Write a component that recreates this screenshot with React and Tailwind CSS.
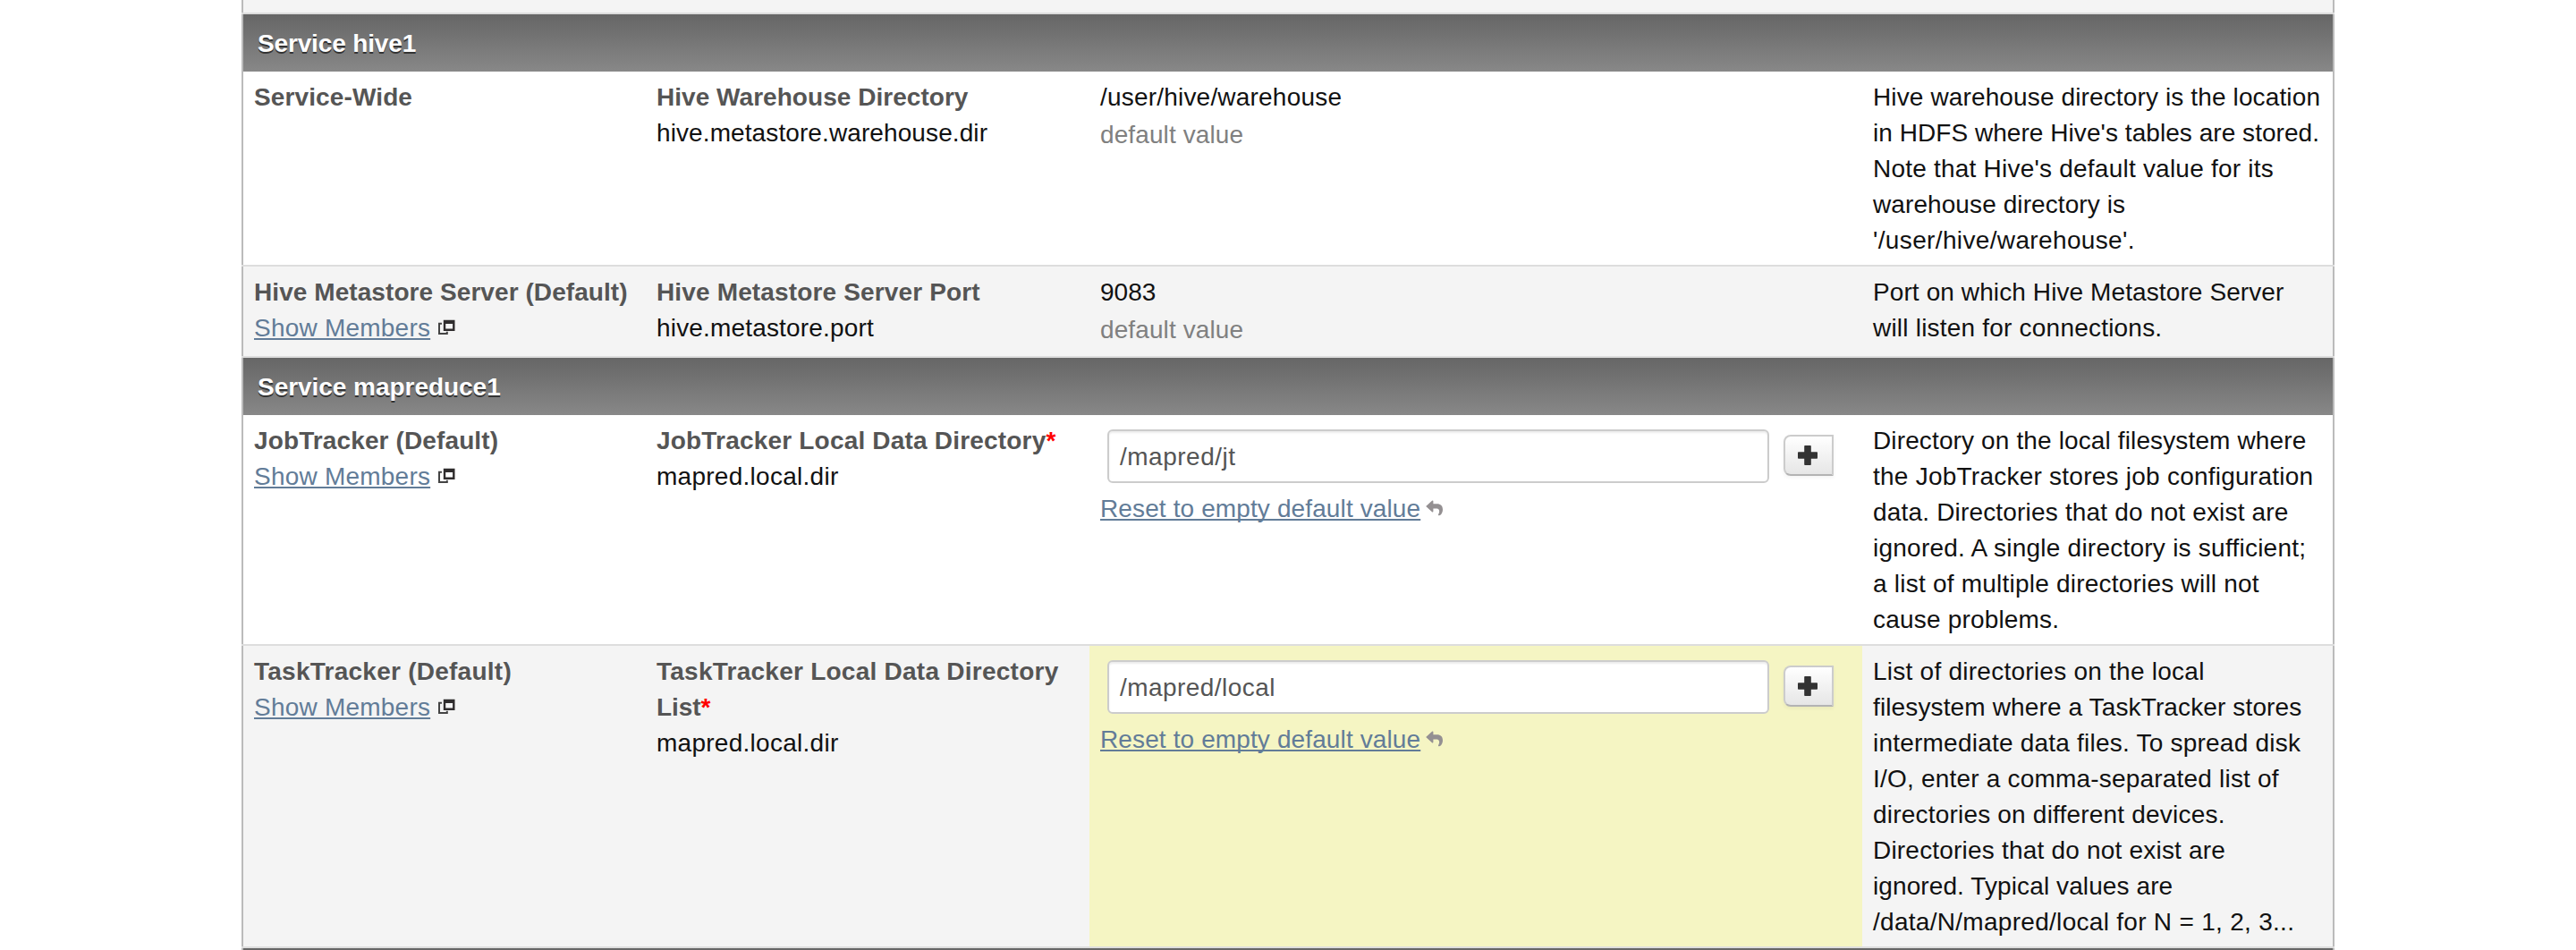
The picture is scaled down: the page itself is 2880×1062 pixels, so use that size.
function Line({ text, track = '', children }) {
  return (
    <div className="h-10 whitespace-nowrap">
      <span className={track}>{text}</span>
      {children}
    </div>
  );
}

function PopupIcon() {
  return (
    <svg className="ml-2 inline-block align-[1px]" width="20" height="18" viewBox="0 0 20 18" fill="none">
      <path d="M5 4.8H2V16H10.8V13.8" stroke="#444" strokeWidth="2" />
      <path fillRule="evenodd" d="M6.8 0.8H19.5V13H6.8ZM9.2 5V10.6H17.1V5Z" fill="#2f2c2d" />
    </svg>
  );
}

function UndoIcon() {
  return (
    <svg className="ml-1.5 inline-block align-baseline" width="20" height="19" viewBox="0 0 20 19">
      <path
        d="M0.2 7L7 0.8Q8.4 0 8.4 1.4V4.2H12.5C16.8 4.2 19 6.6 19 10.6C19 13.6 17.6 17 15 17.2C14 17.2 13.6 16.2 14.4 15.4C15.6 13.6 15.6 9.8 12.5 9.6H8.4V12.6Q8.4 14 7 13.2Z"
        fill="#949092"
      />
    </svg>
  );
}

function Link({ children, className = '' }) {
  return (
    <a
      className={
        'text-[#627c98] underline decoration-2 underline-offset-[2px] [text-decoration-skip-ink:none] ' + className
      }
    >
      {children}
    </a>
  );
}

function Header({ text, track }) {
  return (
    <div className="h-16 border-x-2 border-[#bbb] bg-white">
      <div className="h-16 bg-gradient-to-b from-[#666] to-[#888] px-4 pt-[13px] font-bold whitespace-nowrap text-white [text-shadow:0_2px_0_#333]">
        <span className={track}>{text}</span>
      </div>
    </div>
  );
}

function Rule() {
  return <div className="h-0.5 bg-[#ddd]" />;
}

function ReadOnlyValue({ value, track }) {
  return (
    <>
      <Line text={value} track={track} />
      <div className="pt-0.5 text-[#808080]">
        <Line text="default value" track="tracking-[0.11px]" />
      </div>
    </>
  );
}

function EditableValue({ value, track }) {
  return (
    <>
      <div className="flex pt-[7px] pl-2">
        <div className="h-[60px] w-[740px] rounded-md border-2 border-[#ccc] bg-white px-3 pt-[9px] text-[#555] shadow-[inset_0_2px_2px_rgba(0,0,0,0.075)]">
          <Line text={value} track={track} />
        </div>
        <button className="mt-1.5 ml-4 flex h-[46px] w-14 items-center justify-center rounded-l-lg border-2 border-[#ccc] border-b-[#b3b3b3] bg-gradient-to-b from-white to-[#e6e6e6] shadow-[0_2px_4px_rgba(0,0,0,0.05)]">
          <svg className="mr-0.5" width="24" height="24" viewBox="0 0 24 24">
            <path
              d="M9 1h6a.8.8 0 0 1 .8.8V8.2h6.4a.8.8 0 0 1 .8.8v6a.8.8 0 0 1-.8.8H15.8v6.4a.8.8 0 0 1-.8.8H9a.8.8 0 0 1-.8-.8V15.8H1.8a.8.8 0 0 1-.8-.8V9a.8.8 0 0 1 .8-.8H8.2V1.8A.8.8 0 0 1 9 1Z"
              fill="#333"
            />
          </svg>
        </button>
      </div>
      <div className="pt-[9px] whitespace-nowrap">
        <Link className="tracking-[0.12px]">Reset to empty default value</Link>
        <UndoIcon />
      </div>
    </>
  );
}

function Row({ height, bg = 'bg-white', valueBg = '', group, groupTrack, members, names, prop, propTrack, value, desc }) {
  return (
    <div
      className={
        'grid grid-cols-[450px_496px_864px_526px] overflow-hidden border-x-2 border-[#bbb] ' + bg + ' ' + height
      }
    >
      <div className="px-3 pt-[9px]">
        <div className="font-bold text-[#555]">
          <Line text={group} track={groupTrack} />
        </div>
        {members && (
          <div className="h-10 whitespace-nowrap">
            <Link className="tracking-[0.22px]">Show Members</Link>
            <PopupIcon />
          </div>
        )}
      </div>
      <div className="px-3 pt-[9px]">
        <div className="font-bold text-[#555]">
          {names.map(([text, track, required]) => (
            <Line key={text} text={text} track={track}>
              {required && <span className="text-[#f00]">*</span>}
            </Line>
          ))}
        </div>
        <Line text={prop} track={propTrack} />
      </div>
      <div className={'px-3 pt-[9px] ' + valueBg}>{value}</div>
      <div className="px-3 pt-[9px]">
        {desc.map(([text, track]) => (
          <Line key={text} text={text} track={track} />
        ))}
      </div>
    </div>
  );
}

export default function App() {
  return (
    <div className="h-[1062px] w-[2880px] overflow-hidden bg-white pl-[270px] font-['Liberation_Sans',Arial,sans-serif] text-[28px] leading-10 text-[#111]">
      <div className="w-[2340px]">
        <div className="h-3.5 border-x-2 border-[#bbb] bg-[#f4f4f4]" />
        <Rule />
        <Header text="Service hive1" track="tracking-[-0.15px]" />
        <Row
          height="h-[216px]"
          group="Service-Wide"
          groupTrack="tracking-[0.12px]"
          names={[['Hive Warehouse Directory', 'tracking-[0.04px]']]}
          prop="hive.metastore.warehouse.dir"
          propTrack="tracking-[0.1px]"
          value={<ReadOnlyValue value="/user/hive/warehouse" track="tracking-[0.2px]" />}
          desc={[
            ['Hive warehouse directory is the location', 'tracking-[0.13px]'],
            ["in HDFS where Hive's tables are stored.", 'tracking-[0.05px]'],
            ["Note that Hive's default value for its", 'tracking-[0.22px]'],
            ['warehouse directory is', 'tracking-[0.09px]'],
            ["'/user/hive/warehouse'.", 'tracking-[0.36px]'],
          ]}
        />
        <Rule />
        <Row
          height="h-[100px]"
          bg="bg-[#f4f4f4]"
          group="Hive Metastore Server (Default)"
          groupTrack="tracking-[0.07px]"
          members
          names={[['Hive Metastore Server Port', 'tracking-[0.15px]']]}
          prop="hive.metastore.port"
          propTrack="tracking-[0.17px]"
          value={<ReadOnlyValue value="9083" track="tracking-[0px]" />}
          desc={[
            ['Port on which Hive Metastore Server', 'tracking-[0.1px]'],
            ['will listen for connections.', 'tracking-[0.21px]'],
          ]}
        />
        <Rule />
        <Header text="Service mapreduce1" track="tracking-[-0.04px]" />
        <Row
          height="h-[256px]"
          group="JobTracker (Default)"
          groupTrack="tracking-[0.12px]"
          members
          names={[['JobTracker Local Data Directory', 'tracking-[0.19px]', true]]}
          prop="mapred.local.dir"
          propTrack="tracking-[0.27px]"
          value={<EditableValue value="/mapred/jt" track="tracking-[0.5px]" />}
          desc={[
            ['Directory on the local filesystem where', 'tracking-[0.13px]'],
            ['the JobTracker stores job configuration', 'tracking-[0.24px]'],
            ['data. Directories that do not exist are', 'tracking-[0.18px]'],
            ['ignored. A single directory is sufficient;', 'tracking-[0.24px]'],
            ['a list of multiple directories will not', 'tracking-[0.22px]'],
            ['cause problems.', 'tracking-[0.19px]'],
          ]}
        />
        <Rule />
        <Row
          height="h-[336px]"
          bg="bg-[#f4f4f4]"
          valueBg="bg-[#f5f5c3]"
          group="TaskTracker (Default)"
          groupTrack="tracking-[0.25px]"
          members
          names={[
            ['TaskTracker Local Data Directory', 'tracking-[0.25px]'],
            ['List', 'tracking-[-0.1px]', true],
          ]}
          prop="mapred.local.dir"
          propTrack="tracking-[0.27px]"
          value={<EditableValue value="/mapred/local" track="tracking-[0.45px]" />}
          desc={[
            ['List of directories on the local', 'tracking-[0.25px]'],
            ['filesystem where a TaskTracker stores', 'tracking-[0.13px]'],
            ['intermediate data files. To spread disk', 'tracking-[0.22px]'],
            ['I/O, enter a comma-separated list of', 'tracking-[0.2px]'],
            ['directories on different devices.', 'tracking-[0.2px]'],
            ['Directories that do not exist are', 'tracking-[0.2px]'],
            ['ignored. Typical values are', 'tracking-[0.1px]'],
            ['/data/N/mapred/local for N = 1, 2, 3...', 'tracking-[0.29px]'],
          ]}
        />
        <Rule />
        <Header text="" track="" />
      </div>
    </div>
  );
}
